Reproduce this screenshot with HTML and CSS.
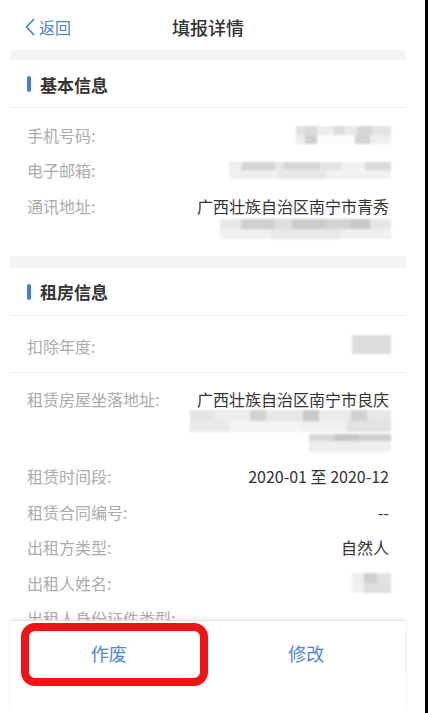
FILE: index.html
```html
<!DOCTYPE html>
<html lang="zh-CN">
<head>
<meta charset="utf-8">
<title>填报详情</title>
<link rel="stylesheet" href="styles.css">
</head>
<body>
<div class="device">
  <div class="screen">
    <div class="app">
      <header class="nav">
        <a class="back">
          <svg class="back-icon" width="10" height="18" viewBox="0 0 10 18"><polyline points="8.5,1.5 1.5,9 8.5,16.5" fill="none" stroke="#4f80cf" stroke-width="1.8" stroke-linecap="round" stroke-linejoin="round"/></svg>
          <span>返回</span>
        </a>
        <h1 class="title">填报详情</h1>
        <span class="nav-spacer"></span>
      </header>

      <main class="content">
        <div class="band"></div>
        <section class="card">
          <h2 class="card-head">基本信息</h2>
          <div class="card-body card-body-basic">
            <div class="row"><span class="label">手机号码:</span><span class="value"><i class="mz mz-phone"></i></span></div>
            <div class="row"><span class="label">电子邮箱:</span><span class="value"><i class="mz mz-email"></i></span></div>
            <div class="row"><span class="label">通讯地址:</span><span class="value"><span class="addr-text">广西壮族自治区南宁市青秀</span><i class="mz mz-addr1"></i></span></div>
          </div>
        </section>

        <div class="band band-2"></div>
        <section class="card">
          <h2 class="card-head">租房信息</h2>
          <div class="card-body">
            <div class="row row-year"><span class="label">扣除年度:</span><span class="value"><i class="mz mz-year"></i></span></div>
            <div class="row row-addr"><span class="label">租赁房屋坐落地址:</span><span class="value"><span class="addr-text">广西壮族自治区南宁市良庆</span><i class="mz mz-addr2"></i><i class="mz mz-addr3"></i></span></div>
            <div class="row"><span class="label">租赁时间段:</span><span class="value">2020-01 至 2020-12</span></div>
            <div class="row"><span class="label">租赁合同编号:</span><span class="value">--</span></div>
            <div class="row"><span class="label">出租方类型:</span><span class="value">自然人</span></div>
            <div class="row"><span class="label">出租人姓名:</span><span class="value"><i class="mz mz-name"></i></span></div>
            <div class="row"><span class="label">出租人身份证件类型:</span><span class="value">--</span></div>
          </div>
        </section>
      </main>

      <footer class="footer">
        <div class="actions">
          <button class="btn btn-void">作废</button>
          <button class="btn btn-edit">修改</button>
        </div>
        <div class="highlight"></div>
      </footer>
    </div>
  </div>
  <div class="bezel"></div>
</div>
</body>
</html>
```

FILE: styles.css
```css
* { box-sizing: border-box; }

html, body {
  margin: 0;
  padding: 0;
  background: #fff;
}

body {
  font-family: "Noto Sans CJK SC", "Noto Sans", sans-serif;
  color: #333;
}

.device {
  display: flex;
  width: 428px;
  height: 713px;
  overflow: hidden;
}

.screen {
  width: 425px;
  height: 713px;
  background: #fff;
}

.bezel {
  width: 3px;
  background: #000;
}

.app {
  width: 396px;
  margin-left: 10px;
  height: 713px;
  display: flex;
  flex-direction: column;
}

/* nav */
.nav {
  height: 50px;
  flex-shrink: 0;
  display: grid;
  grid-template-columns: 1fr auto 1fr;
  align-items: center;
  padding-top: 4px;
}

.back {
  display: flex;
  align-items: center;
  gap: 4px;
  padding-left: 15px;
  color: #4f80cf;
  font-size: 16px;
  line-height: 22px;
}

.back-icon { display: block; }

.title {
  margin: 0;
  font-size: 18px;
  font-weight: 500;
  color: #333;
  line-height: 24px;
}

/* content */
.content {
  flex: 1;
  overflow: hidden;
}

.band {
  height: 10px;
  background: #f4f4f5;
}

.band-2 { height: 12px; }

.card-head {
  margin: 0;
  height: 48px;
  border-bottom: 1px solid #ededed;
  display: flex;
  align-items: center;
  gap: 9px;
  padding-left: 17px;
  font-size: 17px;
  font-weight: 700;
  color: #333;
  padding-top: 1px;
}

.card-head::before {
  content: "";
  width: 4px;
  height: 16px;
  border-radius: 2px;
  background: #3d7fe6;
}

.card-body-basic {
  padding: 9px 0 10px;
}

.row {
  display: flex;
  justify-content: space-between;
  align-items: flex-start;
  padding: 6.75px 17px 6.75px 17px;
  font-size: 16px;
  line-height: 22px;
}

.label {
  color: #ababab;
  flex-shrink: 0;
}

.value {
  color: #333;
  text-align: right;
  display: flex;
  flex-direction: column;
  align-items: flex-end;
}

.row-year {
  padding-top: 19px;
  padding-bottom: 15px;
  border-bottom: 1px solid #ededed;
}

.row-addr {
  padding-top: 15px;
  padding-bottom: 7px;
}

.row-addr .label { margin-right: 20px; }

.addr-text { white-space: nowrap; }

/* mosaic placeholders for blurred data */
.mz {
  display: block;
  filter: blur(1px);
  margin-right: -2px;
}

.mz-phone {
  width: 95px;
  height: 18px;
  margin-top: 2px;
  background:
    linear-gradient(90deg, #e2e2e2 0 10%, #d9d9d9 10% 22%, #ececec 22% 40%, #dcdcdc 40% 52%, #e9e9e9 52% 64%, #d6d6d6 64% 80%, #e4e4e4 80% 100%) top / 100% 50% no-repeat,
    linear-gradient(90deg, #ececec 0 10%, #cfcfcf 10% 22%, #fbfbfb 22% 62%, #d2d2d2 62% 78%, #eeeeee 78% 100%) bottom / 100% 50% no-repeat;
}

.mz-email {
  width: 162px;
  height: 17px;
  margin-top: 3px;
  background:
    linear-gradient(90deg, #ececec 0 8%, #d3d3d3 8% 28%, #e6e6e6 28% 34%, #d6d6d6 34% 56%, #e3e3e3 56% 70%, #f0f0f0 70% 84%, #dadada 84% 100%) top / 100% 50% no-repeat,
    linear-gradient(90deg, #eeeeee 0 30%, #e6e6e6 30% 60%, #f1f1f1 60% 100%) bottom / 100% 50% no-repeat;
}

.mz-addr1 {
  width: 171px;
  height: 20px;
  margin-top: 2px;
  background:
    linear-gradient(90deg, #e8e8e8 0 12%, #cfcfcf 12% 32%, #dedede 32% 42%, #cbcbcb 42% 62%, #d3d3d3 62% 76%, #c8c8c8 76% 88%, #e6e6e6 88% 100%) top / 100% 50% no-repeat,
    linear-gradient(90deg, #f0f0f0 0 30%, #e7e7e7 30% 70%, #efefef 70% 100%) bottom / 100% 50% no-repeat;
}

.mz-year {
  width: 39px;
  height: 19px;
  background: #dcdcdc;
}

.mz-addr2 {
  width: 201px;
  height: 22px;
  background:
    linear-gradient(90deg, #e4e4e4 0 12%, #ececec 12% 30%, #d2d2d2 30% 38%, #e8e8e8 38% 56%, #cacaca 56% 64%, #eaeaea 64% 80%, #d0d0d0 80% 88%, #e6e6e6 88% 100%) top / 100% 50% no-repeat,
    linear-gradient(90deg, #e9e9e9 0 20%, #f4f4f4 20% 55%, #f0f0f0 55% 78%, #e3e3e3 78% 100%) bottom / 100% 50% no-repeat;
}

.mz-addr3 {
  width: 82px;
  height: 18px;
  margin-top: 2px;
  background:
    linear-gradient(90deg, #d8d8d8 0 30%, #c6c6c6 30% 60%, #cfcfcf 60% 100%) top / 100% 40% no-repeat,
    linear-gradient(90deg, #eeeeee 0 100%) bottom / 100% 60% no-repeat;
}

.mz-name {
  width: 39px;
  height: 20px;
  margin-top: 1px;
  background:
    linear-gradient(90deg, #eeeeee 0 30%, #cfcfcf 30% 65%, #e2e2e2 65% 100%) top / 100% 50% no-repeat,
    linear-gradient(90deg, #f0f0f0 0 30%, #dedede 30% 100%) bottom / 100% 50% no-repeat;
}

/* footer */
.footer {
  position: relative;
  height: 93px;
  flex-shrink: 0;
  background: #fff;
  border-top: 1px solid #e4e4e4;
  box-shadow: 0 -2px 4px rgba(0, 0, 0, 0.06);
}

.actions {
  display: flex;
  align-items: center;
  height: 63px;
}

.btn {
  flex: 1;
  height: 40px;
  border: 0;
  background: transparent;
  font-family: inherit;
  font-size: 18px;
  color: #5086d4;
  padding: 0;
}

.btn-edit {
  border-right: 1px solid #ececec;
}

.highlight {
  position: absolute;
  left: 11px;
  top: 2px;
  width: 187px;
  height: 63px;
  border: 8px solid #f21414;
  border-radius: 14px;
  pointer-events: none;
}
```
